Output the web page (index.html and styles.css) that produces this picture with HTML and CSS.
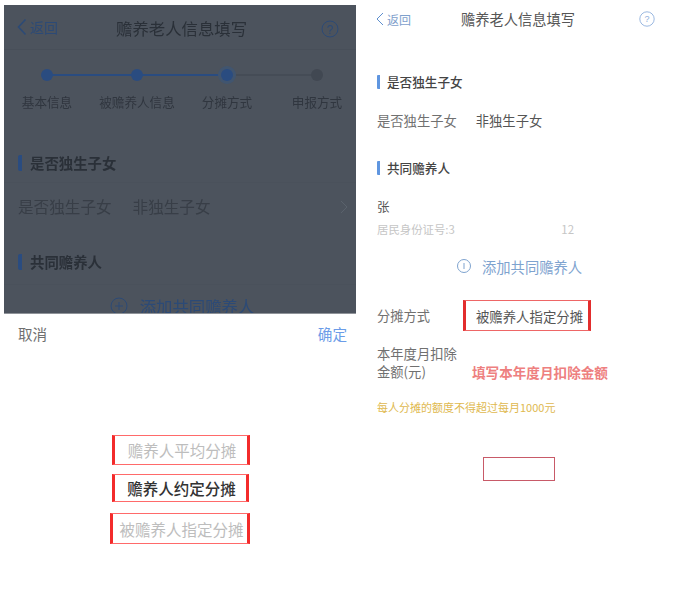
FILE: index.html
```html
<!DOCTYPE html>
<html lang="zh">
<head>
<meta charset="utf-8">
<title>赡养老人信息填写</title>
<link rel="stylesheet" href="styles.css">
</head>
<body>
<main class="page">
  <section class="left">
    <div class="dim">
      <header class="dim-head">
        <div class="dim-back">
          <svg class="dim-chev" viewBox="0 0 10 18"><path d="M8.5 1.5 1.5 9l7 7.5" fill="none" stroke="#2c4a76" stroke-width="1.6"/></svg>
          <span>返回</span>
        </div>
        <div class="dim-title">赡养老人信息填写</div>
        <svg class="dim-help" viewBox="0 0 18 18"><circle cx="9" cy="9" r="8" fill="none" stroke="#2c4a76" stroke-width="1"/><text x="9" y="13.5" text-anchor="middle" class="dim-help-q">?</text></svg>
      </header>
      <div class="steps">
        <div class="step"><i class="dot"></i><span>基本信息</span></div>
        <div class="step"><i class="dot"></i><span>被赡养人信息</span></div>
        <div class="step"><i class="dot now"></i><span>分摊方式</span></div>
        <div class="step"><i class="dot off"></i><span>申报方式</span></div>
      </div>
      <div class="dim-sec">是否独生子女</div>
      <div class="dim-row">
        <span>是否独生子女</span><span>非独生子女</span>
        <svg class="dim-arrow" viewBox="0 0 8 14"><path d="m1 1 6 6-6 6" fill="none" stroke="#5a626c" stroke-width="1"/></svg>
      </div>
      <div class="dim-sec dim-sec-two">共同赡养人</div>
      <div class="dim-add">
        <svg viewBox="0 0 18 18"><circle cx="9" cy="9" r="8" fill="none" stroke="#2c4a76"/><path d="M9 5v8M5 9h8" stroke="#2c4a76"/></svg>
        <span>添加共同赡养人</span>
      </div>
    </div>
    <div class="sheet">
      <div class="sheet-bar"><span class="cancel">取消</span><span class="ok">确定</span></div>
      <div class="picker">
        <div class="opt opt-a">赡养人平均分摊</div>
        <div class="opt opt-b">赡养人约定分摊</div>
        <div class="opt opt-c">被赡养人指定分摊</div>
      </div>
    </div>
  </section>
  <section class="right">
    <header class="head">
      <div class="back">
        <svg viewBox="0 0 8 14"><path d="M7 1 1 7l6 6" fill="none" stroke="#5f8fce" stroke-width="1"/></svg>
        <span>返回</span>
      </div>
      <div class="title">赡养老人信息填写</div>
      <svg class="help" viewBox="0 0 16 16"><circle cx="8" cy="8" r="7.2" fill="none" stroke="#8fb0dc" stroke-width="0.9"/><text x="8" y="11.2" text-anchor="middle" class="help-q">?</text></svg>
    </header>
    <div class="sec sec-one">是否独生子女</div>
    <div class="row"><span class="lbl">是否独生子女</span><span class="val">非独生子女</span></div>
    <div class="sec sec-two">共同赡养人</div>
    <div class="name">张</div>
    <div class="idno"><span>居民身份证号:3</span><span>12</span></div>
    <div class="add">
      <svg viewBox="0 0 16 16"><circle cx="8" cy="8" r="6.5" fill="none" stroke="#7ea3cf"/><path d="M8 5v6" stroke="#7ea3cf"/></svg>
      <span>添加共同赡养人</span>
    </div>
    <div class="share"><span class="lbl">分摊方式</span><div class="share-box">被赡养人指定分摊</div></div>
    <div class="amount">
      <div class="amount-lbl">本年度月扣除<br>金额(元)</div>
      <div class="amount-hint">填写本年度月扣除金额</div>
    </div>
    <p class="note">每人分摊的额度不得超过每月1000元</p>
    <div class="submit"></div>
  </section>
</main>
</body>
</html>
```

FILE: styles.css
```css
* { box-sizing: border-box; }
html, body { margin: 0; padding: 0; background: #fff; }
body { font-family: "Noto Sans CJK SC", "Liberation Sans", sans-serif; }
.page { display: flex; width: 674px; height: 604px; overflow: hidden; }

/* left phone */
.left { width: 352px; margin-left: 4px; padding-top: 5px; flex: none; }
.dim { height: 309px; background: #4c535d; overflow: hidden; filter: blur(0.4px); color: #30363f; border-bottom: 1px solid #8f9399; }
.dim-head { height: 45px; display: flex; align-items: center; position: relative; border-bottom: 1px solid #484f59; }
.dim-back { display: flex; align-items: center; gap: 3px; padding-left: 13px; font-size: 14px; color: #2c4a76; }
.dim-chev { width: 10px; height: 18px; }
.dim-title { position: absolute; left: 112px; top: 12px; font-size: 16.4px; line-height: 22px; color: #2a3038; white-space: nowrap; }
.dim-help { position: absolute; left: 317px; top: 15px; width: 18px; height: 18px; }
.dim-help-q { font: 12px "Liberation Sans", sans-serif; fill: #2c4a76; }
.steps { display: flex; height: 82px; padding-top: 19px; }
.step { width: 90px; flex: none; display: flex; flex-direction: column; align-items: center; position: relative; font-size: 12.6px; line-height: 18px; white-space: nowrap; color: #30363f; }
.step:first-child { margin-left: -2px; }
.step span { margin-top: 12px; }
.dot { display: block; width: 12px; height: 12px; border-radius: 50%; background: #2a4c80; position: relative; z-index: 1; }
.step::after { content: ""; position: absolute; top: 5px; left: 50%; width: 90px; height: 1.5px; background: #2a4c80; }
.step:nth-child(3)::after { background: #454c56; }
.step:last-child::after { display: none; }
.dot.now { box-shadow: 0 0 0 3px #41556f; }
.dot.off { background: #414852; }
.dim-sec { margin: 23px 0 0 14px; padding-left: 8px; height: 16px; line-height: 16px; font-size: 14.4px; font-weight: 700; color: #2a3038; border-left: 4px solid #2a4c80; border-radius: 2px; }
.dim-sec-two { margin-top: 22px; }
.dim-row { display: flex; gap: 21px; align-items: center; height: 50px; padding: 0 0 4px 14px; position: relative; font-size: 15.6px; border-top: 1px solid #4a515b; margin-top: 11px; color: #383e47; }
.dim-arrow { position: absolute; right: 8px; top: 17px; width: 8px; height: 14px; }
.dim-add { display: flex; align-items: center; justify-content: center; gap: 12px; margin-top: 14px; padding: 10px 0 0 4px; line-height: 22px; color: #2c4a76; font-size: 16.4px; border-top: 1px solid #4a515b; }
.dim-add svg { width: 18px; height: 18px; flex: none; }

.sheet { background: #fff; }
.sheet-bar { display: flex; justify-content: space-between; padding: 10px 9px 0 14px; height: 121px; font-size: 14.6px; line-height: 20px; }
.cancel { color: #6f6f6f; }
.ok { color: #6b9ce8; }
.picker { display: flex; flex-direction: column; align-items: center; }
.opt { height: 30px; display: flex; align-items: center; justify-content: center; border: 1px solid #ff6a6a; border-left: 3px solid #f32b2b; border-right: 3px solid #f32b2b; font-size: 15.5px; white-space: nowrap; background: #fff; }
.opt-a { width: 138px; margin-left: 2px; padding-left: 2px; color: #bdbdbd; }
.opt-b { width: 137px; height: 28px; margin-top: 9px; margin-left: 1px; padding-left: 2px; color: #333; font-weight: 500; }
.opt-c { width: 140px; height: 31px; margin-top: 11px; padding-left: 3px; color: #bdbdbd; }

/* right phone */
.right { flex: 1; padding-left: 21px; color: #666; }
.head { height: 38px; display: flex; align-items: center; position: relative; }
.back { display: flex; align-items: center; gap: 3px; margin-left: -1px; font-size: 12px; color: #7ea0cc; }
.back svg { width: 8px; height: 14px; }
.title { position: absolute; left: 84px; top: 9px; font-size: 14.25px; line-height: 20px; color: #555; white-space: nowrap; }
.help { position: absolute; left: 262px; top: 11px; width: 16px; height: 16px; }
.help-q { font: 9px "Liberation Sans", sans-serif; fill: #8fb0dc; }
.sec { height: 14px; line-height: 14px; padding-left: 7px; font-size: 12.6px; font-weight: 500; color: #444; border-left: 3px solid #5f96e0; border-radius: 1px; }
.sec-one { margin-top: 37px; }
.sec-two { margin-top: 30px; }
.row { display: flex; gap: 19px; margin-top: 22px; height: 20px; line-height: 20px; font-size: 13.3px; }
.lbl { font-size: 13.3px; color: #707070; }
.val { color: #555; }
.name { margin-top: 23px; font-size: 12.5px; line-height: 18px; color: #555; }
.idno { display: flex; width: 197px; justify-content: space-between; margin-top: 5px; font-size: 11.4px; line-height: 16px; color: #c6c6c6; }
.add { display: flex; align-items: center; gap: 10px; margin: 19px 0 0 79px; height: 20px; font-size: 14.3px; color: #7ea3cf; }
.add svg { width: 16px; height: 16px; flex: none; }
.share { display: flex; align-items: center; gap: 33px; margin-top: 24px; }
.share .lbl { font-size: 13.25px; }
.share-box { width: 128px; height: 31px; padding-left: 5px; display: flex; align-items: center; justify-content: center; border: 1px solid #e66; border-left: 3px solid #e22d2d; border-right: 3px solid #e22d2d; font-size: 13.4px; color: #555; white-space: nowrap; }
.amount { display: flex; margin-top: 14px; }
.amount-lbl { width: 95px; font-size: 13.3px; line-height: 18px; color: #707070; flex: none; }
.amount-hint { margin-top: 17px; font-size: 13.6px; line-height: 20px; font-weight: 700; color: #ee8080; white-space: nowrap; }
.note { margin: 18px 0 0; font-size: 11px; line-height: 14px; color: #e0b94f; white-space: nowrap; }
.submit { width: 72px; height: 24px; margin: 43px 0 0 106px; border: 1.5px solid #c85a68; background: #fff; }
```
